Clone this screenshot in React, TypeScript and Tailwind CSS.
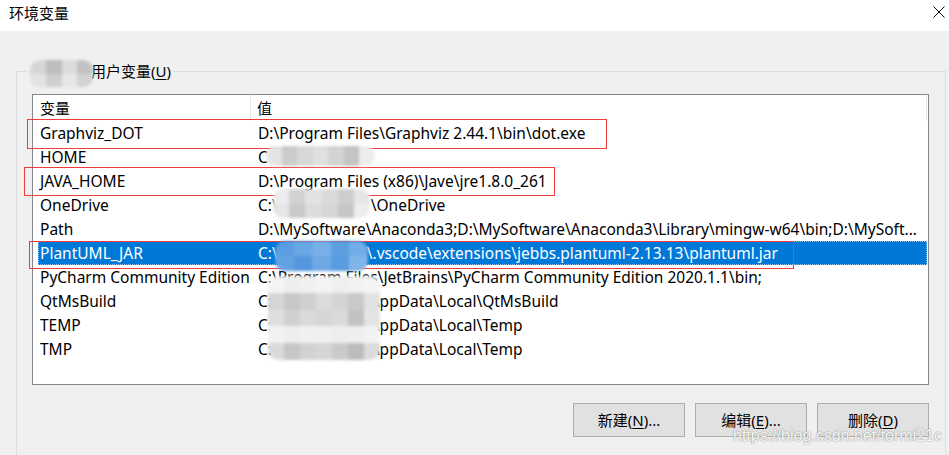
import React from "react";

type Row = { name: string; value: React.ReactNode };

// blank span standing in for the user name hidden under the mosaic
function Gap({ className }: { className: string }) {
  return <span className={`inline-block ${className}`} />;
}

const rows: Row[] = [
  { name: "Graphviz_DOT", value: "D:\\Program Files\\Graphviz 2.44.1\\bin\\dot.exe" },
  { name: "HOME", value: "C" },
  { name: "JAVA_HOME", value: "D:\\Program Files (x86)\\Jave\\jre1.8.0_261" },
  {
    name: "OneDrive",
    value: (
      <>
        C:\<Gap className="w-[93px]" />\OneDrive
      </>
    ),
  },
  {
    name: "Path",
    value:
      "D:\\MySoftware\\Anaconda3;D:\\MySoftware\\Anaconda3\\Library\\mingw-w64\\bin;D:\\MySoft...",
  },
  {
    name: "PlantUML_JAR",
    value: (
      <>
        C:\<Gap className="w-[89px]" />\.vscode\extensions\jebbs.plantuml-2.13.13\plantuml.jar
      </>
    ),
  },
  {
    name: "PyCharm Community Edition",
    value: "C:\\Program Files\\JetBrains\\PyCharm Community Edition 2020.1.1\\bin;",
  },
  {
    name: "QtMsBuild",
    value: (
      <>
        C:\<Gap className="w-[92px]" />AppData\Local\QtMsBuild
      </>
    ),
  },
  {
    name: "TEMP",
    value: (
      <>
        C:\<Gap className="w-[92px]" />AppData\Local\Temp
      </>
    ),
  },
  {
    name: "TMP",
    value: (
      <>
        C:\<Gap className="w-[92px]" />AppData\Local\Temp
      </>
    ),
  },
];

const SELECTED = "PlantUML_JAR";

function Mosaic({ className, cells }: { className: string; cells: string[][] }) {
  return (
    <div className={`absolute flex flex-col overflow-hidden rounded-[10px] blur-[1.5px] ${className}`}>
      {cells.map((line, i) => (
        <div key={i} className="flex flex-1">
          {line.map((c, j) => (
            <div key={j} className={`flex-1 ${c}`} />
          ))}
        </div>
      ))}
    </div>
  );
}

function Mn({ children }: { children: React.ReactNode }) {
  return <span className="underline underline-offset-2">{children}</span>;
}

function Button({ children }: { children: React.ReactNode }) {
  return (
    <button className="h-[34px] w-[112px] border border-[#adadad] bg-[#e1e1e1] text-[15px] text-black">
      {children}
    </button>
  );
}

export default function App() {
  return (
    <div className="relative h-[455px] w-[949px] overflow-hidden bg-[#f0f0f0] font-['Segoe_UI','Noto_Sans','Noto_Sans_CJK_SC',sans-serif] text-[15px] text-black">
      {/* title bar */}
      <div className="flex h-[31px] items-start justify-between bg-white pl-[9px] pr-[4px]">
        <span className="pt-[3px] leading-[20px]">环境变量</span>
        <svg className="mt-[6px]" width="12" height="12" viewBox="0 0 12 12">
          <path d="M0.5 0.5 L11.5 11.5 M11.5 0.5 L0.5 11.5" stroke="#111" strokeWidth="1" />
        </svg>
      </div>

      {/* group box */}
      <div className="relative ml-[16px] mr-[3px] mt-[40px] h-[400px] border-l border-r border-t border-[#dcdcdc] pl-[15px] pt-[22px]">
        <div className="absolute -top-[11px] left-[10px] bg-[#f0f0f0] pl-[2px] pr-[2px] leading-[20px]">
          <span className="inline-block w-[62px]" />
          用户变量(<Mn>U</Mn>)
        </div>

        {/* list view */}
        <div className="h-[291px] w-[897px] border border-[#828790] bg-white">
          <div className="flex h-[26px] items-center">
            <div className="h-full w-[218px] border-r border-[#e5e5e5] pl-[7px] leading-[27px]">变量</div>
            <div className="h-full w-[676px] border-r border-[#e5e5e5] pl-[6px] leading-[27px]">值</div>
          </div>
          <div className="pl-[5px] pr-[1px] text-[15.5px]">
            {rows.map((r) => {
              const sel = r.name === SELECTED;
              return (
                <div
                  key={r.name}
                  className={`flex h-[24px] items-center whitespace-pre leading-[24px] ${
                    sel ? "border border-dotted border-[#8cc0ee] bg-[#0078d7] text-white" : "border border-transparent"
                  }`}
                >
                  <div className="w-[212px] shrink-0 overflow-hidden pl-[1px]">{r.name}</div>
                  <div className="min-w-0 flex-1 overflow-hidden pl-[7px]">{r.value}</div>
                </div>
              );
            })}
          </div>
        </div>

        <div className="mt-[18px] flex w-[897px] justify-end gap-[10px]">
          <Button>
            新建(<Mn>N</Mn>)...
          </Button>
          <Button>
            编辑(<Mn>E</Mn>)...
          </Button>
          <Button>
            删除(<Mn>D</Mn>)
          </Button>
        </div>
      </div>

      {/* red annotation boxes */}
      <div className="absolute left-[27px] top-[119px] h-[30px] w-[580px] border border-[#ee3b3b]" />
      <div className="absolute left-[24px] top-[167px] h-[29px] w-[531px] border border-[#ee3b3b]" />
      <div className="absolute left-[29px] top-[241px] h-[28px] w-[765px] border border-[#ee3b3b]" />

      {/* privacy mosaics */}
      <Mosaic
        className="left-[30px] top-[60px] h-[27px] w-[63px]"
        cells={[
          ["bg-[#d6d6d6]", "bg-[#bdbdbd]", "bg-[#dcdcdc]", "bg-[#c2c2c2]"],
          ["bg-[#e2e2e2]", "bg-[#cfcfcf]", "bg-[#e6e6e6]", "bg-[#d2d2d2]"],
        ]}
      />
      <Mosaic
        className="left-[266px] top-[146px] h-[20px] w-[109px]"
        cells={[["bg-[#e4e4e4]", "bg-[#cccccc]", "bg-[#d8d8d8]", "bg-[#e0e0e0]", "bg-[#d4d4d4]", "bg-[#c4c4c4]", "bg-[#ececec]"]]}
      />
      <Mosaic
        className="left-[273px] top-[189px] h-[29px] w-[97px]"
        cells={[
          ["bg-[#ececec]", "bg-[#d2d2d2]", "bg-[#e2e2e2]", "bg-[#dadada]", "bg-[#cdcdcd]", "bg-[#e6e6e6]"],
          ["bg-[#e6e6e6]", "bg-[#c9c9c9]", "bg-[#dcdcdc]", "bg-[#d6d6d6]", "bg-[#c6c6c6]", "bg-[#ededed]"],
        ]}
      />
      <Mosaic
        className="left-[275px] top-[241px] h-[30px] w-[93px]"
        cells={[
          ["bg-[#5b9de0]", "bg-[#6aa7e5]", "bg-[#78b0e8]", "bg-[#5c9ee0]", "bg-[#73ade7]"],
          ["bg-[#62a2e2]", "bg-[#5497de]", "bg-[#6ea9e6]", "bg-[#5a9ce0]", "bg-[#80b5ea]"],
        ]}
      />
      <Mosaic
        className="left-[268px] top-[276px] h-[84px] w-[112px]"
        cells={[
          ["bg-[#f4f4f4]", "bg-[#eeeeee]", "bg-[#f0f0f0]", "bg-[#f3f3f3]", "bg-[#efefef]", "bg-[#f2f2f2]", "bg-[#f4f4f4]"],
          ["bg-[#d6d6d6]", "bg-[#c8c8c8]", "bg-[#d0d0d0]", "bg-[#dcdcdc]", "bg-[#d4d4d4]", "bg-[#c9c9c9]", "bg-[#e2e2e2]"],
          ["bg-[#dedede]", "bg-[#d0d0d0]", "bg-[#dadada]", "bg-[#d6d6d6]", "bg-[#dadada]", "bg-[#c2c2c2]", "bg-[#e4e4e4]"],
          ["bg-[#f2f2f2]", "bg-[#eeeeee]", "bg-[#f1f1f1]", "bg-[#f0f0f0]", "bg-[#eeeeee]", "bg-[#efefef]", "bg-[#f3f3f3]"],
          ["bg-[#dadada]", "bg-[#c6c6c6]", "bg-[#d2d2d2]", "bg-[#d6d6d6]", "bg-[#cacaca]", "bg-[#bcbcbc]", "bg-[#dcdcdc]"],
        ]}
      />

      {/* watermark */}
      <div className="absolute left-[733px] top-[424px] font-['Liberation_Sans',Arial,sans-serif] text-[16px] text-[#f6f6f6] [text-shadow:0_0_1px_#8a8a8a,0_0_2px_#b0b0b0]">
        https://blog.csdn.net/tormi21c
      </div>
    </div>
  );
}
